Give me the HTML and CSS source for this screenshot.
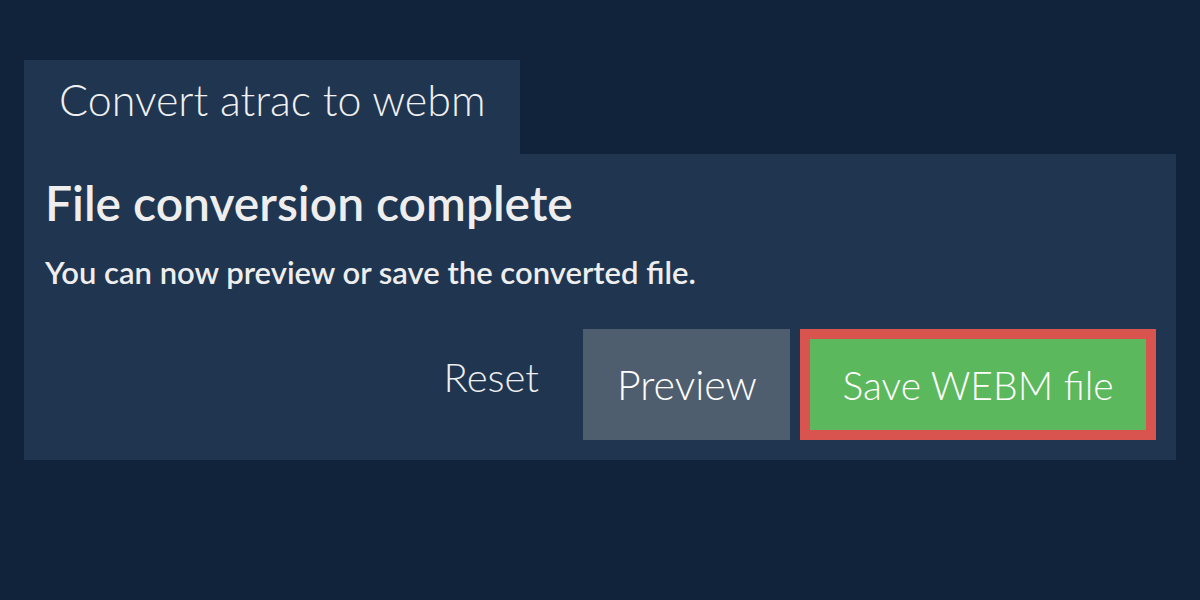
FILE: index.html
```html
<!DOCTYPE html>
<html lang="en">
<head>
<meta charset="utf-8">
<title>Convert atrac to webm</title>
<link rel="stylesheet" href="styles.css">
</head>
<body>
<main class="page">
  <div class="tab">Convert atrac to webm</div>
  <section class="panel">
    <h2 class="title">File conversion complete</h2>
    <p class="lead">You can now preview or save the converted file.</p>
    <div class="actions">
      <button class="btn btn-link">Reset</button>
      <button class="btn btn-grey">Preview</button>
      <button class="btn btn-save">Save WEBM file</button>
    </div>
  </section>
</main>
</body>
</html>
```

FILE: styles.css
```css
html, body {
  margin: 0;
  padding: 0;
}
body {
  background: #11233a;
  color: #eeeeee;
  font-family: Lato, "Open Sans", sans-serif;
  height: 600px;
}
.page {
  padding: 60px 24px 0 24px;
}
.tab {
  display: inline-block;
  background: #203550;
  font-weight: 300;
  font-size: 43px;
  line-height: 80px;
  height: 80px;
  padding: 0 34px 14px 35px;
  color: #f0f0f0;
}
.panel {
  background: #203550;
  padding: 19px 20px 20px 21px;
}
.title {
  margin: 0;
  font-size: 48px;
  font-weight: 600;
  line-height: 60px;
  color: #eeeeee;
}
.lead {
  margin: 19px 0 0 0;
  font-size: 31px;
  font-weight: 600;
  line-height: 40px;
}
.actions {
  display: flex;
  justify-content: flex-end;
  align-items: stretch;
  gap: 10px;
  margin-top: 37px;
}
.btn {
  font-family: Lato, "Open Sans", sans-serif;
  font-weight: 300;
  font-size: 40px;
  border: 0;
  color: #ffffff;
  height: 111px;
  padding: 0 34px;
  white-space: nowrap;
  cursor: pointer;
}
.btn-link {
  background: transparent;
  color: #eeeeee;
  padding-bottom: 16px;
}
.btn-grey {
  background: #4e5e6e;
  width: 207px;
  font-size: 41px;
}
.btn-save {
  background: #5cb85c;
  border: 10px solid #d9534f;
  width: 356px;
  padding: 0;
  font-size: 39px;
}
```
